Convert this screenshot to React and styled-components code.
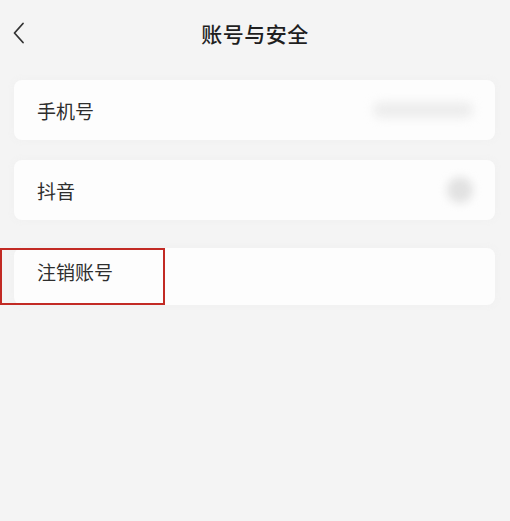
import React from "react";
import styled, { createGlobalStyle } from "styled-components";

const GlobalStyle = createGlobalStyle`
  html, body {
    margin: 0;
    padding: 0;
    background: #f4f4f4;
  }
  body {
    font-family: "Noto Sans CJK SC", "Noto Sans", sans-serif;
  }
`;

const Page = styled.div`
  width: 510px;
  height: 521px;
  background: #f4f4f4;
  overflow: hidden;
`;

const Header = styled.div`
  position: relative;
  height: 66px;
  display: flex;
  align-items: center;
  justify-content: center;
`;

const BackButton = styled.div`
  position: absolute;
  left: 10px;
  top: 21px;
  width: 18px;
  height: 24px;
  display: flex;
  align-items: center;
  justify-content: center;
`;

const Title = styled.h1`
  margin: 0;
  font-size: 21px;
  font-weight: 500;
  color: #1f1f1f;
  letter-spacing: 0.5px;
`;

const List = styled.div`
  display: flex;
  flex-direction: column;
  padding: 14px 15px 0 14px;
`;

const Row = styled.div`
  position: relative;
  height: ${(p) => p.$h || 60}px;
  margin-top: ${(p) => p.$mt || 0}px;
  background: #fdfdfd;
  border-radius: 8px;
  display: flex;
  align-items: center;
  justify-content: space-between;
  padding: 0 22px ${(p) => p.$pb || 0}px 23px;
  box-sizing: border-box;
  box-shadow: 0 0 6px rgba(240, 240, 240, 0.9);
`;

const Label = styled.span`
  font-size: 19px;
  color: #2e2e2e;
`;

const BlurredValue = styled.div`
  width: 100px;
  height: 16px;
  border-radius: 8px;
  background: #ededed;
  filter: blur(5px);
`;

const BlurredAvatar = styled.div`
  width: 26px;
  height: 26px;
  border-radius: 50%;
  background: #e2e2e2;
  filter: blur(4px);
`;

const Highlight = styled.div`
  position: absolute;
  left: -14px;
  top: 0;
  width: 165px;
  height: 57px;
  border: 2px solid #c22a24;
  box-sizing: border-box;
  pointer-events: none;
`;

export default function App() {
  return (
    <Page>
      <GlobalStyle />
      <Header>
        <BackButton>
          <svg width="14" height="22" viewBox="0 0 14 22" fill="none">
            <path d="M11 1.5 L2.5 11 L11 20.5" stroke="#333" strokeWidth="1.8" strokeLinecap="round" strokeLinejoin="round" />
          </svg>
        </BackButton>
        <Title>账号与安全</Title>
      </Header>
      <List>
        <Row>
          <Label>手机号</Label>
          <BlurredValue />
        </Row>
        <Row $mt={20}>
          <Label>抖音</Label>
          <BlurredAvatar />
        </Row>
        <Row $mt={28} $h={57} $pb={10}>
          <Label>注销账号</Label>
          <Highlight />
        </Row>
      </List>
    </Page>
  );
}
